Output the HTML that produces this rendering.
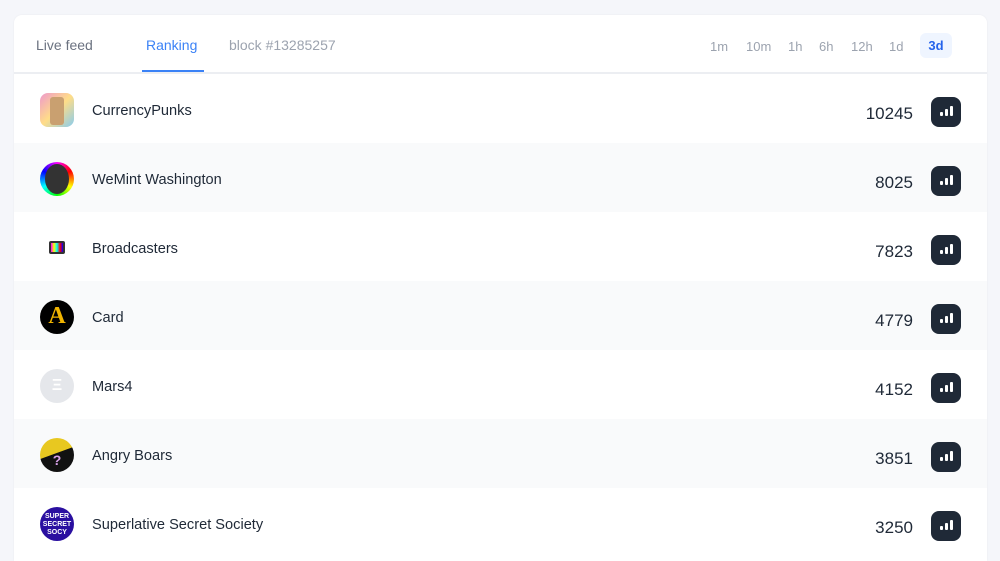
<!DOCTYPE html>
<html><head><style>
html,body{margin:0;width:1000px;height:561px;overflow:hidden}
body{background:#f5f6fa;font-family:"Liberation Sans",sans-serif;position:relative}
.card{position:absolute;left:14px;top:15px;width:973px;height:546px;background:#fff;border-radius:8px 8px 0 0;overflow:hidden;box-shadow:0 0 2px rgba(0,0,0,.05)}
.hdr{height:57px;border-bottom:2px solid #eceef2;position:relative}
.tab{position:absolute;top:22px;font-size:14px;color:#6b7280}
.rk{color:#3b82f6}
.ul{position:absolute;left:128px;top:55px;width:62px;height:2px;background:#3b82f6}
.tf{position:absolute;top:24px;font-size:13px;color:#9ca3af}
.sel{position:absolute;left:906px;top:18px;width:32px;height:25px;background:#eff5ff;border-radius:6px;color:#2563eb;font-weight:bold;font-size:13px;text-align:center;line-height:25px}
.row{height:69px;position:relative}
.av{position:absolute;left:26px;top:19px;width:34px;height:34px;border-radius:50%}
.nm{position:absolute;left:78px;top:29px;font-size:14.6px;color:#1f2937}
.num{position:absolute;right:74px;top:30px;font-size:17px;color:#1f2937}
.btn{position:absolute;left:917px;top:23px;width:30px;height:30px;border-radius:8px;background:#1f2937}
.btn i{position:absolute;bottom:11px;width:3px;background:#fff;border-radius:1px}
</style></head><body>
<div class="card">
<div class="hdr">
<span class="tab" style="left:22px">Live feed</span>
<span class="tab rk" style="left:132px">Ranking</span>
<span class="tab" style="left:215px;color:#9ca3af">block #13285257</span>
<div class="ul"></div>
<span class="tf" style="left:696px">1m</span>
<span class="tf" style="left:732px">10m</span>
<span class="tf" style="left:774px">1h</span>
<span class="tf" style="left:805px">6h</span>
<span class="tf" style="left:837px">12h</span>
<span class="tf" style="left:875px">1d</span>
<div class="sel">3d</div>
</div>
<div>
<div class="row" style="background:#fff"><div class="av" style="border-radius:8px;background:linear-gradient(135deg,#e9c,#fd8,#8ce);"><div style="position:absolute;left:10px;top:4px;width:14px;height:28px;background:#c9a070;border-radius:3px"></div></div><span class="nm">CurrencyPunks</span><span class="num">10245</span><div class="btn"><i style="left:9px;height:4px"></i><i style="left:14px;height:7px"></i><i style="left:19px;height:10px"></i></div></div>
<div class="row" style="background:#f9fafb"><div class="av" style="background:conic-gradient(#f0f,#f00,#ff0,#0f0,#0ff,#00f,#f0f)"><div style="position:absolute;left:5px;top:2px;width:24px;height:30px;background:#333;border-radius:50%"></div></div><span class="nm">WeMint Washington</span><span class="num">8025</span><div class="btn"><i style="left:9px;height:4px"></i><i style="left:14px;height:7px"></i><i style="left:19px;height:10px"></i></div></div>
<div class="row" style="background:#fff"><div class="av" style="left:35px;top:29px;width:16px;height:13px;border-radius:2px;background:linear-gradient(90deg,#f0f,#ff0,#0ff,#f00,#00f);border:2px solid #333;box-sizing:border-box"></div><span class="nm">Broadcasters</span><span class="num">7823</span><div class="btn"><i style="left:9px;height:4px"></i><i style="left:14px;height:7px"></i><i style="left:19px;height:10px"></i></div></div>
<div class="row" style="background:#f9fafb"><div class="av" style="background:#000;color:#f0b400;font:bold 24px 'Liberation Serif',serif;text-align:center;line-height:32px">A</div><span class="nm">Card</span><span class="num">4779</span><div class="btn"><i style="left:9px;height:4px"></i><i style="left:14px;height:7px"></i><i style="left:19px;height:10px"></i></div></div>
<div class="row" style="background:#fff"><div class="av" style="background:#e5e7eb;color:#fff;font-size:16px;text-align:center;line-height:34px;font-weight:bold">Ξ</div><span class="nm">Mars4</span><span class="num">4152</span><div class="btn"><i style="left:9px;height:4px"></i><i style="left:14px;height:7px"></i><i style="left:19px;height:10px"></i></div></div>
<div class="row" style="background:#f9fafb"><div class="av" style="background:linear-gradient(160deg,#e8c820 45%,#111 46%);color:#d8a0e8;font-weight:bold;font-size:14px;text-align:center;line-height:44px">?</div><span class="nm">Angry Boars</span><span class="num">3851</span><div class="btn"><i style="left:9px;height:4px"></i><i style="left:14px;height:7px"></i><i style="left:19px;height:10px"></i></div></div>
<div class="row" style="background:#fff"><div class="av" style="background:#2a0fa0;color:#fff;font-size:7px;font-weight:bold;text-align:center;line-height:8px;padding-top:6px;box-sizing:border-box">SUPER<br>SECRET<br>SOCY</div><span class="nm">Superlative Secret Society</span><span class="num">3250</span><div class="btn"><i style="left:9px;height:4px"></i><i style="left:14px;height:7px"></i><i style="left:19px;height:10px"></i></div></div>
</div>
</div>
</body></html>
